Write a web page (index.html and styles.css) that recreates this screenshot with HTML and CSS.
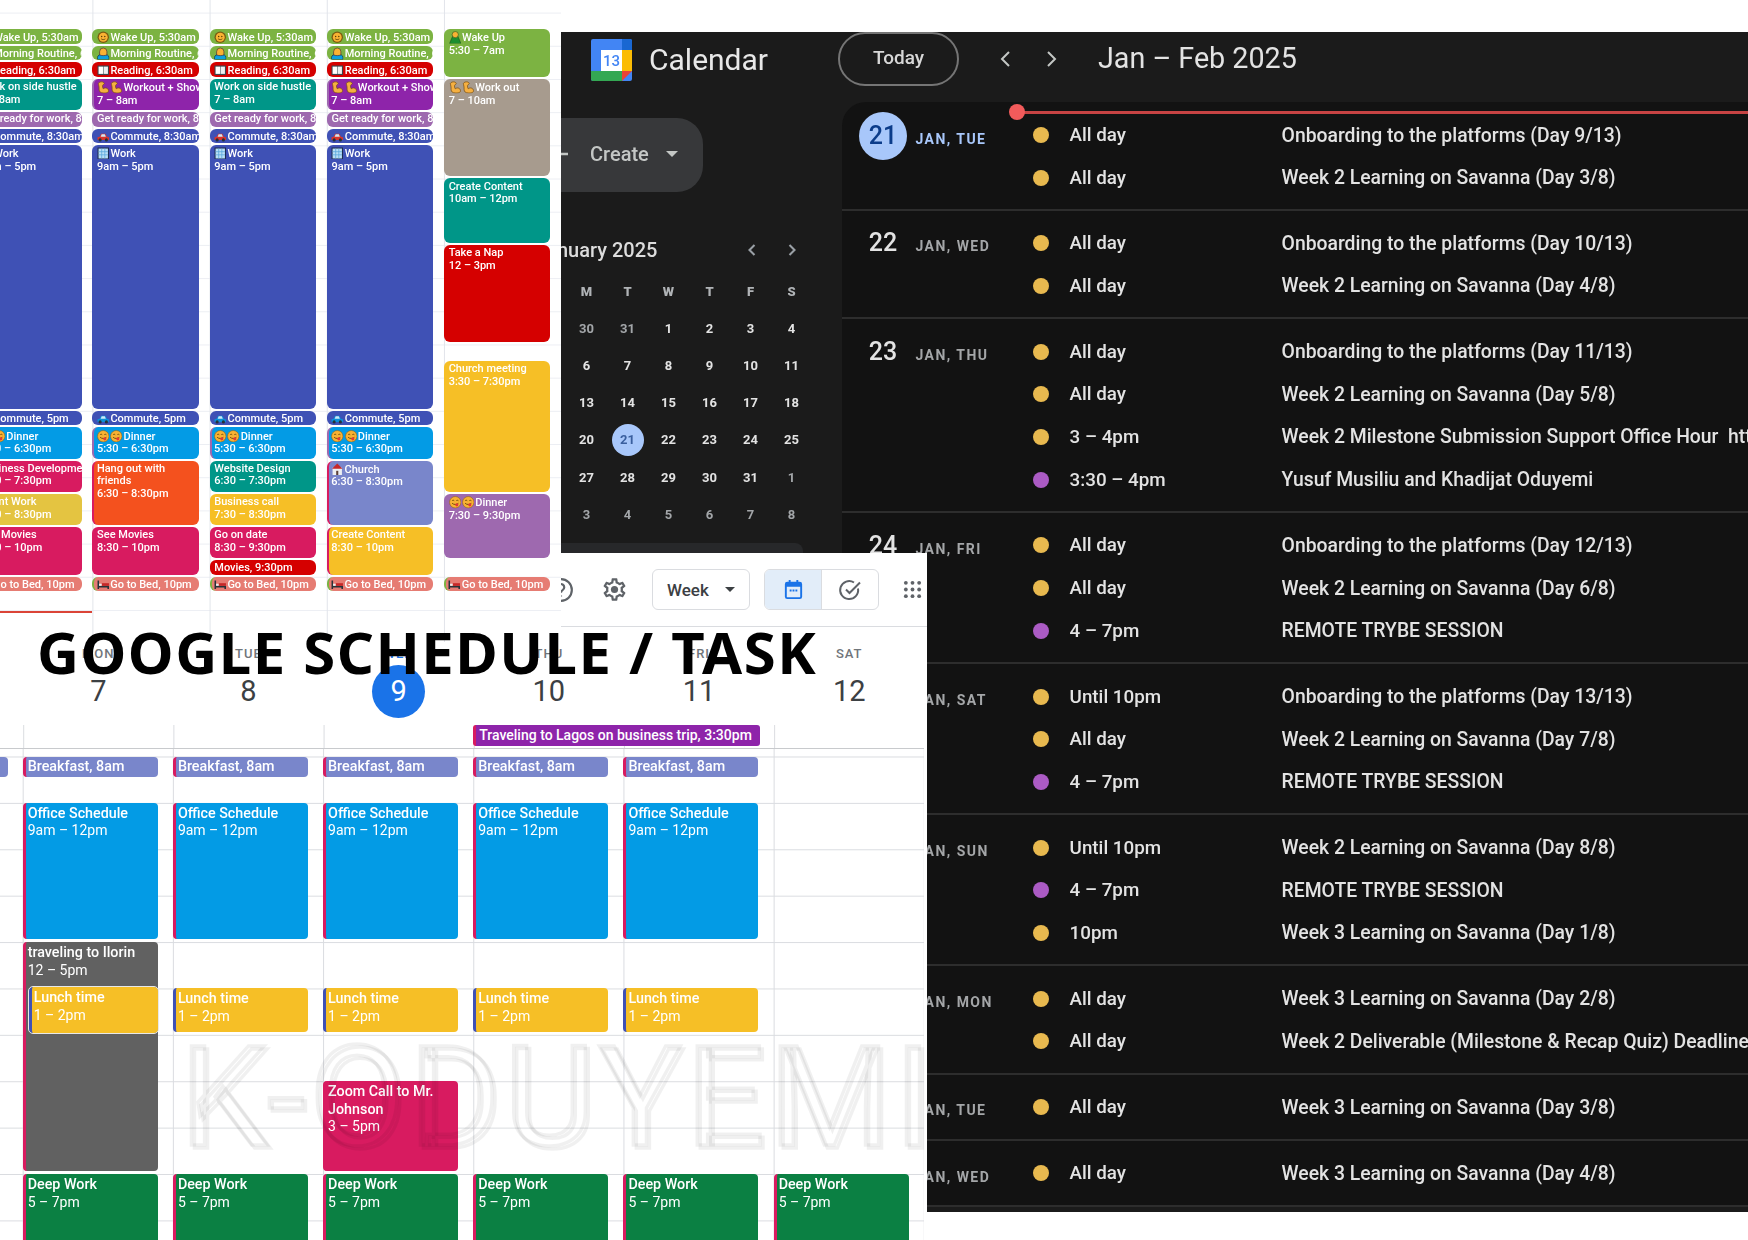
FILE: index.html
```html
<!DOCTYPE html>
<html lang="en">

<head>
    <meta charset="UTF-8">
    <title>Google Schedule / Task</title>
    <link rel="stylesheet" href="styles.css">
</head>

<body>
    <svg class="defs" width="0" height="0">
        <symbol id="sun" viewBox="0 0 24 24">
            <circle cx="12" cy="12" r="11" fill="#7a5a10" />
            <circle cx="12" cy="12" r="8.5" fill="#f9b233" />
            <circle cx="9" cy="10.5" r="1.3" fill="#4a3200" />
            <circle cx="15" cy="10.5" r="1.3" fill="#4a3200" />
            <path d="M8 15c2 2 6 2 8 0" stroke="#4a3200" stroke-width="1.4" fill="none" />
        </symbol>
        <symbol id="person" viewBox="0 0 24 24">
            <path d="M1 24v-4c0-4 4-6 11-6s11 2 11 6v4z" fill="#0aa0e0" stroke="#123" stroke-width="1.2" />
            <path d="M5 15V9a7 7 0 0 1 14 0v6c-3 2-11 2-14 0z" fill="#f9b233" stroke="#423" stroke-width="1.2" />
        </symbol>
        <symbol id="hiker" viewBox="0 0 24 24">
            <path d="M1 24L7 10h10l6 14z" fill="#1b8e2f" stroke="#0b4a18" />
            <circle cx="12" cy="7" r="6" fill="#f9b233" stroke="#0b4a18" />
        </symbol>
        <symbol id="book" viewBox="0 0 24 24">
            <rect x="1" y="3" width="22" height="18" rx="1" fill="#37474f" />
            <rect x="3" y="5" width="8.5" height="14" fill="#fff" />
            <rect x="12.500" y="5" width="8.500" height="14" fill="#eceff1" />
        </symbol>
        <symbol id="arm" viewBox="0 0 24 24">
            <path d="M6 2c4-1 7 0 8 3l-3 3c-1 2 0 5 1 7 3-3 9-2 10 3 1 4-4 5-9 5-6 0-9-2-9-7 0-3 0-6-1-9-1-2 0-4 3-5z" fill="#f5b041" stroke="#7a4f10" stroke-width="1.4" />
        </symbol>
        <symbol id="car" viewBox="0 0 24 24">
            <path d="M1 19v-5l4-1 3-6h8l3 6 4 1v5z" fill="currentColor" />
            <path d="M9 8h6l2 5H7z" fill="#cfe8f5" />
            <circle cx="6" cy="19" r="3" fill="#263238" />
            <circle cx="18" cy="19" r="3" fill="#263238" />
        </symbol>
        <symbol id="office" viewBox="0 0 24 24">
            <rect x="1" y="1" width="22" height="22" fill="#1d2b4f" />
            <rect x="3" y="3" width="18" height="19" fill="#b9dff5" />
            <path d="M9 3v19M15 3v19M3 9h18M3 15h18" stroke="#5aa6dc" stroke-width="1.5" />
        </symbol>
        <symbol id="yum" viewBox="0 0 24 24">
            <circle cx="12" cy="12" r="11" fill="#f9b233" stroke="#8a5a10" />
            <path d="M6 9c1-1 3-1 4 0M14 9c1-1 3-1 4 0" stroke="#4a3200" stroke-width="1.5" fill="none" />
            <path d="M6 14c3 3 9 3 12 0" stroke="#4a3200" stroke-width="1.5" fill="none" />
            <circle cx="15" cy="17" r="3" fill="#e53935" />
        </symbol>
        <symbol id="bed" viewBox="0 0 24 24">
            <path d="M1 5h3v10h19v6h-3v-3H4v3H1z" fill="#263238" />
            <rect x="9" y="10" width="14" height="5" fill="#c62828" />
            <rect x="4" y="11" width="5" height="4" fill="#eceff1" />
        </symbol>
        <symbol id="church" viewBox="0 0 24 24">
            <rect x="3" y="9" width="18" height="15" fill="#eceff1" />
            <path d="M2 11L12 1l10 10z" fill="#c62828" />
            <rect x="10" y="15" width="4" height="9" fill="#5d4037" />
        </symbol>
    </svg>

    <div class="stage">

        <!-- dark agenda window -->
        <section class="dark">
            <header class="dark-top">
                <svg class="cal-logo" viewBox="0 0 41 42">
                    <rect width="41" height="42" rx="2" fill="#4285f4" />
                    <path d="M31 0h8a2 2 0 0 1 2 2v9H31z" fill="#1967d2" />
                    <rect x="31" y="11" width="10" height="21" fill="#fbbc04" />
                    <path d="M0 32h31v10H2a2 2 0 0 1-2-2z" fill="#34a853" />
                    <path d="M31 32h10l-10 10z" fill="#ea4335" />
                    <rect x="10" y="11" width="21" height="21" fill="#fff" />
                    <text class="cal-logo-num" x="20.500" y="27">13</text>
                </svg>
                <span class="cal-name">Calendar</span>
                <span class="today">Today</span>
                <svg class="nav-chev nav-prev" viewBox="0 0 24 24"><path d="M15 5l-7 7 7 7" /></svg>
                <svg class="nav-chev nav-next" viewBox="0 0 24 24"><path d="M9 5l7 7-7 7" /></svg>
                <h2 class="range">Jan – Feb 2025</h2>
            </header>

            <div class="dark-main">
                <aside class="side">
                    <div class="create">
                        <svg class="plus" viewBox="0 0 24 24"><path d="M12 2v20M2 12h20" /></svg>
                        <span>Create</span>
                        <i class="caret"></i>
                    </div>
                    <div class="mini-head">
                        <span class="mini-title">January 2025</span>
                        <svg class="mini-chev" viewBox="0 0 24 24"><path d="M15 6l-6 6 6 6" /></svg>
                        <svg class="mini-chev" viewBox="0 0 24 24"><path d="M9 6l6 6-6 6" /></svg>
                    </div>
                    <div class="mini-grid">
                        <b>M</b><b>T</b><b>W</b><b>T</b><b>F</b><b>S</b>
                        <span class="dim">30</span><span class="dim">31</span><span>1</span><span>2</span><span>3</span><span>4</span>
                        <span>6</span><span>7</span><span>8</span><span>9</span><span>10</span><span>11</span>
                        <span>13</span><span>14</span><span>15</span><span>16</span><span>17</span><span>18</span>
                        <span>20</span><span class="cur"><em>21</em></span><span>22</span><span>23</span><span>24</span><span>25</span>
                        <span>27</span><span>28</span><span>29</span><span>30</span><span>31</span><span class="dim">1</span>
                        <span class="dim">3</span><span class="dim">4</span><span class="dim">5</span><span class="dim">6</span><span class="dim">7</span><span class="dim">8</span>
                    </div>
                    <div class="side-bar"></div>
                </aside>

                <div class="agenda">
                    <div class="now"></div>

                    <div class="a-row a-first">
                        <div class="a-date"><span class="a-num a-today">21</span><span class="a-day a-day-today">JAN, TUE</span></div>
                        <div>
                            <div class="a-item"><i class="dot"></i><span>All day</span><span>Onboarding to the platforms (Day 9/13)</span></div>
                            <div class="a-item"><i class="dot"></i><span>All day</span><span>Week 2 Learning on Savanna (Day 3/8)</span></div>
                        </div>
                    </div>
                    <div class="a-row">
                        <div class="a-date"><span class="a-num">22</span><span class="a-day">JAN, WED</span></div>
                        <div>
                            <div class="a-item"><i class="dot"></i><span>All day</span><span>Onboarding to the platforms (Day 10/13)</span></div>
                            <div class="a-item"><i class="dot"></i><span>All day</span><span>Week 2 Learning on Savanna (Day 4/8)</span></div>
                        </div>
                    </div>
                    <div class="a-row">
                        <div class="a-date"><span class="a-num">23</span><span class="a-day">JAN, THU</span></div>
                        <div>
                            <div class="a-item"><i class="dot"></i><span>All day</span><span>Onboarding to the platforms (Day 11/13)</span></div>
                            <div class="a-item"><i class="dot"></i><span>All day</span><span>Week 2 Learning on Savanna (Day 5/8)</span></div>
                            <div class="a-item"><i class="dot"></i><span>3 – 4pm</span><span>Week 2 Milestone Submission Support Office Hour &nbsp;https://meet.google.com</span></div>
                            <div class="a-item"><i class="dot dot-p"></i><span>3:30 – 4pm</span><span>Yusuf Musiliu and Khadijat Oduyemi</span></div>
                        </div>
                    </div>
                    <div class="a-row">
                        <div class="a-date"><span class="a-num">24</span><span class="a-day">JAN, FRI</span></div>
                        <div>
                            <div class="a-item"><i class="dot"></i><span>All day</span><span>Onboarding to the platforms (Day 12/13)</span></div>
                            <div class="a-item"><i class="dot"></i><span>All day</span><span>Week 2 Learning on Savanna (Day 6/8)</span></div>
                            <div class="a-item"><i class="dot dot-p"></i><span>4 – 7pm</span><span>REMOTE TRYBE SESSION</span></div>
                        </div>
                    </div>
                    <div class="a-row">
                        <div class="a-date"><span class="a-num">25</span><span class="a-day">JAN, SAT</span></div>
                        <div>
                            <div class="a-item"><i class="dot"></i><span>Until 10pm</span><span>Onboarding to the platforms (Day 13/13)</span></div>
                            <div class="a-item"><i class="dot"></i><span>All day</span><span>Week 2 Learning on Savanna (Day 7/8)</span></div>
                            <div class="a-item"><i class="dot dot-p"></i><span>4 – 7pm</span><span>REMOTE TRYBE SESSION</span></div>
                        </div>
                    </div>
                    <div class="a-row">
                        <div class="a-date"><span class="a-num">26</span><span class="a-day">JAN, SUN</span></div>
                        <div>
                            <div class="a-item"><i class="dot"></i><span>Until 10pm</span><span>Week 2 Learning on Savanna (Day 8/8)</span></div>
                            <div class="a-item"><i class="dot dot-p"></i><span>4 – 7pm</span><span>REMOTE TRYBE SESSION</span></div>
                            <div class="a-item"><i class="dot"></i><span>10pm</span><span>Week 3 Learning on Savanna (Day 1/8)</span></div>
                        </div>
                    </div>
                    <div class="a-row">
                        <div class="a-date"><span class="a-num">27</span><span class="a-day">JAN, MON</span></div>
                        <div>
                            <div class="a-item"><i class="dot"></i><span>All day</span><span>Week 3 Learning on Savanna (Day 2/8)</span></div>
                            <div class="a-item"><i class="dot"></i><span>All day</span><span>Week 2 Deliverable (Milestone &amp; Recap Quiz) Deadline</span></div>
                        </div>
                    </div>
                    <div class="a-row">
                        <div class="a-date"><span class="a-num">28</span><span class="a-day">JAN, TUE</span></div>
                        <div>
                            <div class="a-item"><i class="dot"></i><span>All day</span><span>Week 3 Learning on Savanna (Day 3/8)</span></div>
                        </div>
                    </div>
                    <div class="a-row">
                        <div class="a-date"><span class="a-num">29</span><span class="a-day">JAN, WED</span></div>
                        <div>
                            <div class="a-item"><i class="dot"></i><span>All day</span><span>Week 3 Learning on Savanna (Day 4/8)</span></div>
                        </div>
                    </div>
                </div>
            </div>
        </section>

        <!-- white week window -->
        <section class="week">
            <div class="wk-tools">
                <svg class="help" viewBox="0 0 24 24"><circle cx="12" cy="12" r="10" /><path d="M9 9.500a3 3 0 1 1 4.500 2.600c-1 .6-1.500 1.200-1.500 2.400M12 17v1" /></svg>
                <svg class="gear" viewBox="0 0 24 24"><path d="M19.430 12.980c.04-.32.07-.64.07-.98 0-.34-.03-.66-.07-.98l2.110-1.650c.19-.15.24-.42.12-.64l-2-3.460c-.09-.16-.26-.25-.44-.25-.06 0-.12.01-.17.03l-2.490 1c-.52-.4-1.080-.73-1.690-.98l-.38-2.650C14.460 2.180 14.250 2 14 2h-4c-.25 0-.46.18-.49.42l-.38 2.650c-.61.25-1.170.59-1.690.98l-2.490-1c-.06-.02-.12-.03-.18-.03-.17 0-.34.09-.43.25l-2 3.460c-.13.22-.07.49.12.64l2.110 1.650c-.04.32-.07.65-.07.98 0 .33.03.66.07.98l-2.110 1.650c-.19.15-.24.42-.12.64l2 3.460c.09.16.26.25.44.25.06 0 .12-.01.17-.03l2.490-1c.52.4 1.080.73 1.690.98l.38 2.650c.03.24.24.42.49.42h4c.25 0 .46-.18.49-.42l.38-2.650c.61-.25 1.170-.59 1.690-.98l2.490 1c.06.02.12.03.18.03.17 0 .34-.09.43-.25l2-3.460c.12-.22.07-.49-.12-.64l-2.110-1.650zm-1.980-1.710c.04.31.05.52.05.73 0 .21-.02.43-.05.73l-.14 1.130.89.7 1.080.84-.7 1.210-1.270-.51-1.040-.42-.9.68c-.43.32-.84.56-1.250.73l-1.060.43-.16 1.130-.2 1.350h-1.400l-.19-1.350-.16-1.130-1.060-.43c-.43-.18-.83-.41-1.230-.71l-.91-.7-1.060.43-1.270.51-.7-1.210 1.080-.84.89-.7-.14-1.130c-.03-.31-.05-.54-.05-.74s.02-.43.05-.73l.14-1.130-.89-.7-1.080-.84.7-1.210 1.270.51 1.040.42.9-.68c.43-.32.84-.56 1.250-.73l1.060-.43.16-1.130.2-1.350h1.390l.19 1.350.16 1.130 1.060.43c.43.18.83.41 1.230.71l.91.7 1.060-.43 1.270-.51.7 1.210-1.070.85-.89.7.14 1.130z" /><circle cx="12" cy="12" r="3.200" /></svg>
                <div class="wk-select">Week<i class="caret caret-dark"></i></div>
                <div class="wk-toggle">
                    <span class="wk-toggle-on">
                        <svg class="tg-cal" viewBox="0 0 24 24"><path d="M7 2v2H5.500A2.500 2.500 0 0 0 3 6.500v13A2.500 2.500 0 0 0 5.500 22h13a2.500 2.500 0 0 0 2.500-2.500v-13A2.500 2.500 0 0 0 18.500 4H17V2h-2v2H9V2zM5 9h14v10.500a.5.5 0 0 1-.5.5h-13a.5.5 0 0 1-.5-.5zm3 3v2h2v-2zm3 0v2h2v-2zm3 0v2h2v-2z" /></svg>
                    </span>
                    <span>
                        <svg class="tg-task" viewBox="0 0 24 24"><path d="M20 10.500a9 9 0 1 1-4-6M8 11.500l3.500 3.500L22 4.500" /></svg>
                    </span>
                </div>
                <svg class="apps" viewBox="0 0 20 20"><circle cx="3" cy="3" r="2" /><circle cx="10" cy="3" r="2" /><circle cx="17" cy="3" r="2" /><circle cx="3" cy="10" r="2" /><circle cx="10" cy="10" r="2" /><circle cx="17" cy="10" r="2" /><circle cx="3" cy="17" r="2" /><circle cx="10" cy="17" r="2" /><circle cx="17" cy="17" r="2" /></svg>
            </div>

            <div class="wk-head">
                <div class="wk-cell"><span class="wk-lbl">SUN</span><span class="wk-num">6</span></div>
                <div class="wk-cell"><span class="wk-lbl">MON</span><span class="wk-num">7</span></div>
                <div class="wk-cell"><span class="wk-lbl">TUE</span><span class="wk-num">8</span></div>
                <div class="wk-cell"><span class="wk-lbl wk-lbl-on">WED</span><span class="wk-num wk-num-on">9</span></div>
                <div class="wk-cell"><span class="wk-lbl">THU</span><span class="wk-num">10</span></div>
                <div class="wk-cell"><span class="wk-lbl">FRI</span><span class="wk-num">11</span></div>
                <div class="wk-cell"><span class="wk-lbl">SAT</span><span class="wk-num">12</span></div>
            </div>

            <div class="wk-body">
                <div class="wk-allday">
                    <div class="wk-banner">Traveling to Lagos on business trip, 3:30pm</div>
                </div>
                <div class="wk-days">
                    <div class="wk-day">
                        <div class="w-ev bf">Breakfast, 8am</div>
                    </div>
                    <div class="wk-day">
                        <div class="w-ev bf">Breakfast, 8am</div>
                        <div class="w-ev office">Office Schedule<br><span>9am – 12pm</span></div>
                        <div class="w-ev travel">traveling to Ilorin<br><span>12 – 5pm</span></div>
                        <div class="w-ev lunch lunch-in">Lunch time<br><span>1 – 2pm</span></div>
                        <div class="w-ev deep">Deep Work<br><span>5 – 7pm</span></div>
                    </div>
                    <div class="wk-day">
                        <div class="w-ev bf">Breakfast, 8am</div>
                        <div class="w-ev office">Office Schedule<br><span>9am – 12pm</span></div>
                        <div class="w-ev lunch">Lunch time<br><span>1 – 2pm</span></div>
                        <div class="w-ev deep">Deep Work<br><span>5 – 7pm</span></div>
                    </div>
                    <div class="wk-day">
                        <div class="w-ev bf">Breakfast, 8am</div>
                        <div class="w-ev office">Office Schedule<br><span>9am – 12pm</span></div>
                        <div class="w-ev lunch">Lunch time<br><span>1 – 2pm</span></div>
                        <div class="w-ev zoom">Zoom Call to Mr. Johnson<br><span>3 – 5pm</span></div>
                        <div class="w-ev deep">Deep Work<br><span>5 – 7pm</span></div>
                    </div>
                    <div class="wk-day">
                        <div class="w-ev bf">Breakfast, 8am</div>
                        <div class="w-ev office">Office Schedule<br><span>9am – 12pm</span></div>
                        <div class="w-ev lunch">Lunch time<br><span>1 – 2pm</span></div>
                        <div class="w-ev deep">Deep Work<br><span>5 – 7pm</span></div>
                    </div>
                    <div class="wk-day">
                        <div class="w-ev bf">Breakfast, 8am</div>
                        <div class="w-ev office">Office Schedule<br><span>9am – 12pm</span></div>
                        <div class="w-ev lunch">Lunch time<br><span>1 – 2pm</span></div>
                        <div class="w-ev deep">Deep Work<br><span>5 – 7pm</span></div>
                    </div>
                    <div class="wk-day">
                        <div class="w-ev deep">Deep Work<br><span>5 – 7pm</span></div>
                    </div>
                </div>
            </div>

            <div class="mark" data-text="K-ODUYEMI">K-ODUYEMI</div>
        </section>

        <!-- white routine window, top left -->
        <section class="routine">
            <div class="today-line"></div>
            <div class="r-cols">

                <div class="r-col">
                    <div class="ev green s1"><svg class="emo"><use href="#sun" /></svg>Wake Up, 5:30am</div>
                    <div class="ev green s1"><svg class="emo"><use href="#person" /></svg>Morning Routine, 6am</div>
                    <div class="ev red s1"><svg class="emo"><use href="#book" /></svg>Reading, 6:30am</div>
                    <div class="ev teal s2">Work on side hustle<br>7 – 8am</div>
                    <div class="ev mauve s1">Get ready for work, 8am</div>
                    <div class="ev indigo s1"><svg class="emo car-r"><use href="#car" /></svg>Commute, 8:30am</div>
                    <div class="ev indigo s16"><svg class="emo"><use href="#office" /></svg>Work<br>9am – 5pm</div>
                    <div class="ev indigo s1"><svg class="emo car-b"><use href="#car" /></svg>Commute, 5pm</div>
                    <div class="ev sky s2 st-mauve"><svg class="emo"><use href="#yum" /></svg><svg class="emo"><use href="#yum" /></svg>Dinner<br>5:30 – 6:30pm</div>
                    <div class="ev pink s2">Business Development<br>6:30 – 7:30pm</div>
                    <div class="ev citron s2">Client Work<br>7:30 – 8:30pm</div>
                    <div class="ev pink s3">See Movies<br>8:30 – 10pm</div>
                    <div class="ev flam s1 st-green"><svg class="emo"><use href="#bed" /></svg>Go to Bed, 10pm</div>
                </div>

                <div class="r-col">
                    <div class="ev green s1"><svg class="emo"><use href="#sun" /></svg>Wake Up, 5:30am</div>
                    <div class="ev green s1"><svg class="emo"><use href="#person" /></svg>Morning Routine, 6am</div>
                    <div class="ev red s1"><svg class="emo"><use href="#book" /></svg>Reading, 6:30am</div>
                    <div class="ev purple s2 st-mauve"><svg class="emo"><use href="#arm" /></svg><svg class="emo"><use href="#arm" /></svg>Workout + Shower<br>7 – 8am</div>
                    <div class="ev mauve s1">Get ready for work, 8am</div>
                    <div class="ev indigo s1"><svg class="emo car-r"><use href="#car" /></svg>Commute, 8:30am</div>
                    <div class="ev indigo s16"><svg class="emo"><use href="#office" /></svg>Work<br>9am – 5pm</div>
                    <div class="ev indigo s1"><svg class="emo car-b"><use href="#car" /></svg>Commute, 5pm</div>
                    <div class="ev sky s2 st-mauve"><svg class="emo"><use href="#yum" /></svg><svg class="emo"><use href="#yum" /></svg>Dinner<br>5:30 – 6:30pm</div>
                    <div class="ev orange s4 st-pink">Hang out with<br>friends<br>6:30 – 8:30pm</div>
                    <div class="ev pink s3">See Movies<br>8:30 – 10pm</div>
                    <div class="ev flam s1 st-green"><svg class="emo"><use href="#bed" /></svg>Go to Bed, 10pm</div>
                </div>

                <div class="r-col">
                    <div class="ev green s1"><svg class="emo"><use href="#sun" /></svg>Wake Up, 5:30am</div>
                    <div class="ev green s1"><svg class="emo"><use href="#person" /></svg>Morning Routine, 6am</div>
                    <div class="ev red s1"><svg class="emo"><use href="#book" /></svg>Reading, 6:30am</div>
                    <div class="ev teal s2">Work on side hustle<br>7 – 8am</div>
                    <div class="ev mauve s1">Get ready for work, 8am</div>
                    <div class="ev indigo s1"><svg class="emo car-r"><use href="#car" /></svg>Commute, 8:30am</div>
                    <div class="ev indigo s16"><svg class="emo"><use href="#office" /></svg>Work<br>9am – 5pm</div>
                    <div class="ev indigo s1"><svg class="emo car-b"><use href="#car" /></svg>Commute, 5pm</div>
                    <div class="ev sky s2 st-mauve"><svg class="emo"><use href="#yum" /></svg><svg class="emo"><use href="#yum" /></svg>Dinner<br>5:30 – 6:30pm</div>
                    <div class="ev teal s2">Website Design<br>6:30 – 7:30pm</div>
                    <div class="ev banana s2">Business call<br>7:30 – 8:30pm</div>
                    <div class="ev pink s2">Go on date<br>8:30 – 9:30pm</div>
                    <div class="ev red s1">Movies, 9:30pm</div>
                    <div class="ev flam s1 st-green"><svg class="emo"><use href="#bed" /></svg>Go to Bed, 10pm</div>
                </div>

                <div class="r-col">
                    <div class="ev green s1"><svg class="emo"><use href="#sun" /></svg>Wake Up, 5:30am</div>
                    <div class="ev green s1"><svg class="emo"><use href="#person" /></svg>Morning Routine, 6am</div>
                    <div class="ev red s1"><svg class="emo"><use href="#book" /></svg>Reading, 6:30am</div>
                    <div class="ev purple s2 st-mauve"><svg class="emo"><use href="#arm" /></svg><svg class="emo"><use href="#arm" /></svg>Workout + Shower<br>7 – 8am</div>
                    <div class="ev mauve s1">Get ready for work, 8am</div>
                    <div class="ev indigo s1"><svg class="emo car-r"><use href="#car" /></svg>Commute, 8:30am</div>
                    <div class="ev indigo s16"><svg class="emo"><use href="#office" /></svg>Work<br>9am – 5pm</div>
                    <div class="ev indigo s1"><svg class="emo car-b"><use href="#car" /></svg>Commute, 5pm</div>
                    <div class="ev sky s2 st-mauve"><svg class="emo"><use href="#yum" /></svg><svg class="emo"><use href="#yum" /></svg>Dinner<br>5:30 – 6:30pm</div>
                    <div class="ev lav s4 st-pink"><svg class="emo"><use href="#church" /></svg>Church<br>6:30 – 8:30pm</div>
                    <div class="ev banana s3 st-pink">Create Content<br>8:30 – 10pm</div>
                    <div class="ev flam s1 st-green"><svg class="emo"><use href="#bed" /></svg>Go to Bed, 10pm</div>
                </div>

                <div class="r-col">
                    <div class="ev green s3"><svg class="emo"><use href="#hiker" /></svg>Wake Up<br>5:30 – 7am</div>
                    <div class="ev tan s6"><svg class="emo"><use href="#arm" /></svg><svg class="emo"><use href="#arm" /></svg>Work out<br>7 – 10am</div>
                    <div class="ev teal s4">Create Content<br>10am – 12pm</div>
                    <div class="ev red s6">Take a Nap<br>12 – 3pm</div>
                    <div class="ev banana s8 gap-s1">Church meeting<br>3:30 – 7:30pm</div>
                    <div class="ev mauve s4"><svg class="emo"><use href="#yum" /></svg><svg class="emo"><use href="#yum" /></svg>Dinner<br>7:30 – 9:30pm</div>
                    <div class="ev flam s1 st-green gap-s1"><svg class="emo"><use href="#bed" /></svg>Go to Bed, 10pm</div>
                </div>

            </div>
        </section>

        <h1 class="big-title">GOOGLE SCHEDULE / TASK</h1>
    </div>
</body>

</html>
```
FILE: styles.css
```css
* {
    box-sizing: border-box;
}

body {
    margin: 0;
    padding: 0;
    background: #fff;
    font-family: Roboto, "Liberation Sans", sans-serif;
}

.defs {
    position: absolute;
}

/* the page is a collage, each window sits on the free canvas */
.stage {
    position: relative;
    width: 1748px;
    height: 1240px;
    overflow: hidden;
}

/* the windows are soft, low-res captures */
.routine,
.dark,
.week {
    filter: blur(.4px);
}

.big-title {
    position: absolute;
    left: 37px;
    top: 612px;
    margin: 0;
    font: 700 58px/80px "Noto Sans", sans-serif;
    letter-spacing: 1.500px;
    color: #000;
    white-space: nowrap;
}

/* ---------- routine window ---------- */
.routine {
    position: absolute;
    left: 0;
    top: 0;
    width: 561px;
    height: 642px;
    overflow: hidden;
    background-color: #fff;
    background-image:
        linear-gradient(90deg, #e1e4ea 1px, transparent 1px),
        linear-gradient(#eceef3 1px, transparent 1px);
    background-size: 117.2px 100%, 100% 33.2px;
    background-position: 92.4px 0, 0 12.6px;
}

.routine::after {
    content: "";
    position: absolute;
    left: 0;
    right: 0;
    top: 611px;
    bottom: 0;
    background-image: linear-gradient(90deg, #e1e4ea 1px, transparent 1px);
    background-size: 117.2px 100%;
    background-position: 92.4px 0;
    background-color: #fff;
}

.today-line {
    position: absolute;
    left: 0;
    top: 610.500px;
    width: 92px;
    height: 2px;
    background: #db4437;
    z-index: 1;
}

.r-cols {
    display: grid;
    grid-template-columns: repeat(5, 117.2px);
    margin-left: -24.800px;
    padding-top: 29px;
}

.r-col {
    display: flex;
    flex-direction: column;
    gap: 2px;
    padding-right: 10.700px;
}

.ev {
    flex: none;
    overflow: hidden;
    padding: 2.300px 0 0 4.700px;
    border-radius: 6px;
    color: #fff;
    font-size: 11px;
    font-weight: 500;
    line-height: 12.600px;
    white-space: nowrap;
}

.s1 { height: 14.600px; padding-top: 1.500px; }
.s2 { height: 31.200px; }
.s3 { height: 47.800px; }
.s4 { height: 64.400px; }
.s6 { height: 97.600px; }
.s8 { height: 130.800px; }
.s16 { height: 263.600px; }
.gap-s1 { margin-top: 16.600px; }

.st-mauve, .st-green, .st-pink {
    padding-left: 2.500px;
    border-left: 2.200px solid #9e69af;
}

.st-green { border-left-color: #7cb342; }
.st-pink { border-left-color: #d81b60; }

.green { background: #7cb342; }
.red { background: #d50000; }
.teal { background: #009688; }
.purple { background: #8e24aa; }
.mauve { background: #9e69af; }
.indigo { background: #3f51b5; }
.sky { background: #039be5; }
.pink { background: #d81b60; }
.citron { background: #e4c441; }
.orange { background: #f4511e; }
.banana { background: #f6bf26; }
.lav { background: #7986cb; }
.tan { background: #a79b8e; }
.flam { background: #e67c73; }

.emo {
    display: inline-block;
    width: 12.500px;
    height: 12.500px;
    margin-right: .8px;
    vertical-align: -2.500px;
}

.car-r { color: #d9342b; }
.car-b { color: #0a8fd8; }

/* ---------- dark window ---------- */
.dark {
    position: absolute;
    left: 561px;
    top: 32px;
    width: 1187px;
    height: 1180px;
    overflow: hidden;
    background: #1b1b1b;
    color: #e3e3e3;
}

.dark-top {
    display: flex;
    align-items: center;
    height: 54px;
    margin-bottom: 16px;
    padding-left: 30px;
}

.cal-logo {
    width: 41px;
    height: 42px;
    margin-top: 2px;
}

.cal-logo-num {
    fill: #4285f4;
    font: 500 15px Roboto, sans-serif;
    text-anchor: middle;
}

.cal-name {
    margin-left: 17px;
    width: 189px;
    font-size: 30px;
    color: #e8e8e8;
}

.today {
    display: flex;
    align-items: center;
    justify-content: center;
    width: 121px;
    height: 54px;
    padding-bottom: 3px;
    border: 2px solid #757575;
    border-radius: 27px;
    font-size: 19px;
    font-weight: 500;
    color: #d8d8d8;
}

.nav-chev {
    width: 24px;
    height: 24px;
    fill: none;
    stroke: #c4c7c5;
    stroke-width: 2;
}

.nav-prev { margin-left: 35px; }
.nav-next { margin-left: 21px; }

.range {
    margin: 0 0 2px 35px;
    font-size: 28.700px;
    font-weight: 400;
    color: #e3e3e3;
    white-space: nowrap;
}

.dark-main {
    display: grid;
    grid-template-columns: 281px 906px;
}

.side {
    padding-top: 16px;
}

.create {
    display: flex;
    align-items: center;
    width: 172px;
    height: 74px;
    margin-left: -30px;
    padding: 0 0 2px 15px;
    border-radius: 26px;
    background: #37383a;
    font-size: 20px;
    font-weight: 500;
    color: #c4c7c5;
}

.plus {
    width: 24px;
    height: 24px;
    margin-right: 20px;
    stroke: #c4c7c5;
    stroke-width: 2.500;
}

.caret {
    display: inline-block;
    margin-left: 17px;
    border-top: 6px solid #c4c7c5;
    border-left: 6px solid transparent;
    border-right: 6px solid transparent;
}

.mini-head {
    display: flex;
    align-items: center;
    height: 34px;
    margin-top: 41px;
}

.mini-title {
    width: 206.600px;
    margin-left: -26px;
    font-size: 20px;
    font-weight: 500;
    color: #dcdcdc;
}

.mini-chev {
    width: 20px;
    height: 20px;
    margin-right: 20px;
    fill: none;
    stroke: #9aa0a6;
    stroke-width: 2.500;
}

.mini-grid {
    display: grid;
    grid-template-columns: repeat(6, 41px);
    grid-auto-rows: 37.100px;
    margin: 6px 0 0 5px;
    font-size: 13px;
    font-weight: 700;
    color: #e3e3e3;
    text-align: center;
}

.mini-grid b,
.mini-grid span {
    display: flex;
    align-items: center;
    justify-content: center;
}

.mini-grid b { color: #b0b3b6; }
.mini-grid .dim { color: #a3a6a9; }

.mini-grid em {
    display: flex;
    align-items: center;
    justify-content: center;
    width: 32px;
    height: 32px;
    border-radius: 50%;
    background: #a8c7fa;
    color: #3a5f9e;
    font-style: normal;
}

.side-bar {
    width: 242px;
    height: 40px;
    margin-top: 10px;
    border-radius: 0 8px 0 0;
    background: #27282a;
}

.agenda {
    position: relative;
    border-radius: 24px 0 0 0;
    background: #121212;
}

.now {
    position: absolute;
    left: 175px;
    top: 8.500px;
    right: 0;
    height: 3px;
    background: #c74343;
}

.now::before {
    content: "";
    position: absolute;
    left: -8px;
    top: -6.500px;
    width: 16px;
    height: 16px;
    border-radius: 50%;
    background: #f25b5b;
}

.a-row {
    display: grid;
    grid-template-columns: 190.600px 1fr;
    padding: 11px 0 10.300px;
    border-bottom: 2px solid #2d2d2d;
}

.a-first {
    padding: 12px 0 10.200px;
}

.a-first .a-item {
    height: 42.400px;
}

.a-date {
    display: flex;
    align-items: center;
    height: 43px;
    padding-left: 17px;
}

.a-num {
    width: 48px;
    height: 48px;
    flex: none;
    border-radius: 50%;
    font-size: 25px;
    font-weight: 500;
    line-height: 48px;
    text-align: center;
    color: #e3e3e3;
}

.a-today {
    background: #a8c7fa;
    color: #0b3c8a;
}

.a-day {
    margin: 6px 0 0 8.500px;
    font-size: 14px;
    font-weight: 700;
    letter-spacing: 1.450px;
    color: #a4a6a8;
    white-space: nowrap;
}

.a-day-today {
    color: #a8c7fa;
}

.a-item {
    display: grid;
    grid-template-columns: 37px 212px 1fr;
    align-items: center;
    height: 42.600px;
    font-size: 18.800px;
    font-weight: 500;
    color: #e3e3e3;
    white-space: nowrap;
}

.a-item span:last-child {
    font-size: 19.350px;
}

.dot {
    width: 16px;
    height: 16px;
    border-radius: 50%;
    background: #e8b94f;
}

.dot-p {
    background: #ab5bc4;
}

/* ---------- week window ---------- */
.week {
    position: absolute;
    left: 0;
    top: 553px;
    width: 927px;
    height: 687px;
    overflow: hidden;
    background: #fff;
}

.wk-tools {
    display: flex;
    align-items: center;
    height: 74px;
    padding: 0 5px 0 548px;
    border-bottom: 1px solid #dadce0;
}

.help {
    width: 26px;
    height: 26px;
    fill: none;
    stroke: #5f6368;
    stroke-width: 2;
}

.gear {
    width: 27px;
    height: 27px;
    margin-left: 27px;
    fill: #5f6368;
}

.wk-select {
    display: flex;
    align-items: center;
    width: 98px;
    height: 41px;
    margin-left: 24px;
    padding-left: 14px;
    border: 1px solid #dadce0;
    border-radius: 6px;
    font-size: 17px;
    font-weight: 500;
    color: #3c4043;
}

.caret-dark {
    margin-left: 16px;
    border-top: 5px solid #3c4043;
    border-left-width: 5px;
    border-right-width: 5px;
}

.wk-toggle {
    display: flex;
    width: 115px;
    height: 41px;
    margin-left: 14px;
    border: 1px solid #dadce0;
    border-radius: 6px;
    overflow: hidden;
}

.wk-toggle span {
    display: flex;
    flex: 1;
    align-items: center;
    justify-content: center;
}

.wk-toggle-on {
    border-right: 1px solid #dadce0;
    background: #e2edf9;
}

.tg-cal {
    width: 23px;
    height: 23px;
    fill: #1a73e8;
}

.tg-task {
    width: 24px;
    height: 24px;
    fill: none;
    stroke: #5f6368;
    stroke-width: 2;
}

.apps {
    width: 19px;
    height: 19px;
    margin-left: 24px;
    fill: #5f6368;
}

.wk-head {
    display: grid;
    grid-template-columns: repeat(7, 150.200px);
    height: 98px;
    margin-left: -127px;
    padding-top: 19px;
}

.wk-cell {
    display: flex;
    flex-direction: column;
    align-items: center;
}

.wk-lbl {
    font-size: 13px;
    font-weight: 500;
    line-height: 16px;
    letter-spacing: 1px;
    color: #70757a;
}

.wk-lbl-on {
    color: #1a73e8;
}

.wk-num {
    width: 53px;
    height: 53px;
    margin-top: 2.500px;
    border-radius: 50%;
    font-size: 29px;
    line-height: 53px;
    text-align: center;
    color: #3c4043;
}

.wk-num-on {
    background: #1a73e8;
    color: #fff;
}

.wk-body {
    width: 924px;
    height: 520px;
    background-image:
        linear-gradient(90deg, #dadce0 1px, transparent 1px),
        linear-gradient(#dadce0 1px, transparent 1px);
    background-size: 150.200px 100%, 100% 46.400px;
    background-position: 22.700px 0, 0 31.500px;
}

.wk-allday {
    display: grid;
    grid-template-columns: repeat(7, 150.200px);
    height: 24px;
    margin-left: -127.500px;
    border-bottom: 1px solid #c8cacd;
    background: #fff linear-gradient(90deg, #dadce0 1px, transparent 1px) 0 0 / 150.200px 100%;
}

.wk-banner {
    grid-column: 5 / 7;
    height: 20.700px;
    margin-right: 14px;
    padding-left: 3px;
    border-left: 3px solid #d81b60;
    border-radius: 3px;
    background: #8e24aa;
    color: #fff;
    font-size: 14px;
    font-weight: 500;
    line-height: 20px;
    white-space: nowrap;
    overflow: hidden;
}

.wk-days {
    display: grid;
    grid-template-columns: repeat(7, 150.200px);
    margin-left: -127.500px;
    padding-top: 7.500px;
}

.wk-day {
    display: grid;
    grid-template-columns: 135px;
    grid-template-rows: repeat(11, 46.400px);
}

.w-ev {
    grid-column: 1;
    overflow: hidden;
    padding: 2px 0 0 2px;
    border-left: 3px solid #d81b60;
    border-radius: 4px;
    color: #fff;
    font-size: 14.300px;
    font-weight: 500;
    line-height: 17.600px;
}

.w-ev span {
    font-size: 14px;
    font-weight: 400;
}

.bf {
    grid-row: 1;
    align-self: start;
    height: 20.400px;
    padding-top: 1px;
    background: #7986cb;
}

.office {
    grid-row: 2 / 5;
    margin-bottom: 3px;
    background: #039be5;
}

.travel {
    grid-row: 5 / 10;
    margin-bottom: 3px;
    background: #616161;
}

.lunch {
    grid-row: 6;
    margin-bottom: 3px;
    border-left-color: #3f51b5;
    background: #f6bf26;
}

.lunch-in {
    margin: -1px 0 1.500px 6px;
    outline: 1px solid #e8e8e8;
}

.zoom {
    grid-row: 8 / 10;
    margin-bottom: 3px;
    border-left-color: #d81b60;
    background: #d81b60;
}

.deep {
    grid-row: 10 / 12;
    background: #0b8043;
}

.mark {
    position: absolute;
    left: 180px;
    top: 465px;
    font-size: 139px;
    line-height: 160px;
    letter-spacing: 4px;
    color: transparent;
    -webkit-text-stroke: 3.500px rgba(0, 0, 0, .06);
    white-space: nowrap;
    pointer-events: none;
}

.mark::after {
    content: attr(data-text);
    position: absolute;
    left: 3px;
    top: 3px;
}
```
